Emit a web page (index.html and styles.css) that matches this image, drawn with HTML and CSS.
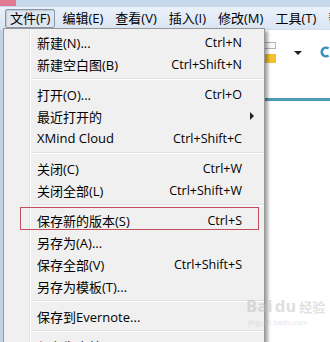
FILE: index.html
```html
<!DOCTYPE html>
<html lang="zh-CN">
<head>
  <meta charset="UTF-8">
  <title>XMind 文件菜单</title>
  <link rel="stylesheet" href="styles.css">
</head>
<body>

  <div class="window">
    <div class="titlebar"><span class="title-accent"></span></div>

    <div class="menubar">
      <span class="menu-title pressed">文件(F)</span>
      <span class="menu-title">编辑(E)</span>
      <span class="menu-title">查看(V)</span>
      <span class="menu-title">插入(I)</span>
      <span class="menu-title">修改(M)</span>
      <span class="menu-title">工具(T)</span>
      <span class="menu-title">帮助(H)</span>
    </div>

    <div class="canvas">
      <div class="toolbar">
        <div class="swatch">
          <span class="swatch-line"></span>
          <span class="swatch-fill"></span>
        </div>
        <span class="drop-arrow"></span>
        <svg class="c-icon" width="12" height="14" viewBox="0 0 12 14">
          <path d="M10 3 A5 5 0 1 0 10 11" fill="none" stroke="#3b8ec2" stroke-width="3"/>
        </svg>
      </div>
    </div>

    <!-- the opened File menu -->
    <div class="dropdown">
      <div class="item"><span>新建(N)...</span><span class="key">Ctrl+N</span></div>
      <div class="item"><span>新建空白图(B)</span><span class="key">Ctrl+Shift+N</span></div>
      <div class="sep"></div>
      <div class="item"><span>打开(O)...</span><span class="key">Ctrl+O</span></div>
      <div class="item"><span>最近打开的</span><span class="submenu"></span></div>
      <div class="item"><span>XMind Cloud</span><span class="key">Ctrl+Shift+C</span></div>
      <div class="sep"></div>
      <div class="item"><span>关闭(C)</span><span class="key">Ctrl+W</span></div>
      <div class="item"><span>关闭全部(L)</span><span class="key">Ctrl+Shift+W</span></div>
      <div class="sep"></div>
      <div class="item marked"><span>保存新的版本(S)</span><span class="key">Ctrl+S</span></div>
      <div class="item"><span>另存为(A)...</span></div>
      <div class="item"><span>保存全部(V)</span><span class="key">Ctrl+Shift+S</span></div>
      <div class="item"><span>另存为模板(T)...</span></div>
      <div class="sep"></div>
      <div class="item"><span>保存到Evernote...</span></div>
      <div class="sep"></div>
      <div class="item"><span>保存为文档(D)</span></div>
    </div>

    <div class="watermark">
      <div class="wm-logo"><span class="wm-bai">Bai</span><span class="wm-du">du</span><span class="wm-jy">经验</span></div>
      <div class="wm-url">jingyan.baidu.com</div>
    </div>
  </div>

</body>
</html>
```

FILE: styles.css
```css
body {
  margin: 0;
  font-family: "Open Sans", "Noto Sans CJK SC", sans-serif;
  font-size: 13px;
  color: #000;
  background: #fff;
}
.window {
  position: relative;
  width: 330px;
  height: 342px;
  overflow: hidden;
  background: #fff;
}
.titlebar {
  height: 7px;
  background: #c8d8ec;
}
.title-accent {
  display: block;
  width: 16px;
  height: 6px;
  background: #e27a93;
}
.menubar {
  display: flex;
  align-items: center;
  height: 22px;
  padding-left: 5px;
  background: linear-gradient(#eaf1fa, #dae5f3);
  border-bottom: 1px solid #d3dde9;
  white-space: nowrap;
}
.menu-title {
  padding: 0 4px;
  margin-right: 2px;
  line-height: 17px;
  border: 1px solid transparent;
}
.menu-title.pressed {
  border-color: #8796aa;
  border-radius: 2px;
  background: #dde5ef;
  box-shadow: inset 1px 1px 1px rgba(0, 0, 0, 0.12);
}
.canvas {
  height: 312px;
  border-left: 3px solid #c3d2e4;
  background: #fff;
}
.toolbar {
  display: flex;
  align-items: flex-start;
  height: 68px;
  padding-left: 247px;
  border-bottom: 3px solid #4d9bb6;
}
.swatch {
  display: flex;
  flex-direction: column;
  gap: 5px;
  width: 30px;
  margin-top: 12px;
}
.swatch-line {
  height: 5px;
  background: #fafafa;
  border: 1px solid #b5b5b5;
}
.swatch-fill {
  height: 9px;
  background: #f3c22c;
}
.drop-arrow {
  margin: 21px 0 0 18px;
  border-left: 4px solid transparent;
  border-right: 4px solid transparent;
  border-top: 4px solid #222;
}
.c-icon {
  margin: 15px 0 0 18px;
}
.dropdown {
  position: absolute;
  top: 28px;
  left: 3px;
  width: 260px;
  padding-top: 2px;
  background-color: #f0f0f0;
  background-image: linear-gradient(to right, transparent 25px, #e0e1e1 25px, #e0e1e1 26px, #fff 26px, #fff 27px, transparent 27px);
  border: 1px solid #979797;
  box-shadow: 3px 3px 3px rgba(0, 0, 0, 0.35);
}
.item {
  position: relative;
  display: flex;
  align-items: center;
  height: 22px;
  padding: 0 22px 0 33px;
  white-space: nowrap;
}
.key {
  margin-left: auto;
  font-size: 12.5px;
}
.submenu {
  margin-left: auto;
  margin-right: -12px;
  border-top: 4px solid transparent;
  border-bottom: 4px solid transparent;
  border-left: 4px solid #222;
}
.sep {
  height: 1px;
  margin: 3px 0 3px 28px;
  background: #e0e0e0;
  border-bottom: 1px solid #fff;
}
.marked::after {
  content: "";
  position: absolute;
  left: 16px;
  right: 5px;
  top: -2px;
  bottom: 1px;
  border: 1px solid #c4505e;
}
.watermark {
  position: absolute;
  left: 246px;
  top: 296px;
  white-space: nowrap;
  color: rgba(185, 185, 185, 0.45);
  pointer-events: none;
}
.wm-logo {
  display: flex;
  align-items: baseline;
  font-family: "DejaVu Sans", sans-serif;
  font-weight: bold;
  font-size: 15px;
  line-height: 22px;
}
.wm-du {
  margin-left: 2px;
}
.wm-jy {
  margin-left: 3px;
  font-family: "Noto Sans CJK SC", sans-serif;
  font-size: 13px;
}
.wm-url {
  font-size: 7px;
  line-height: 9px;
  padding-left: 2px;
}
```
